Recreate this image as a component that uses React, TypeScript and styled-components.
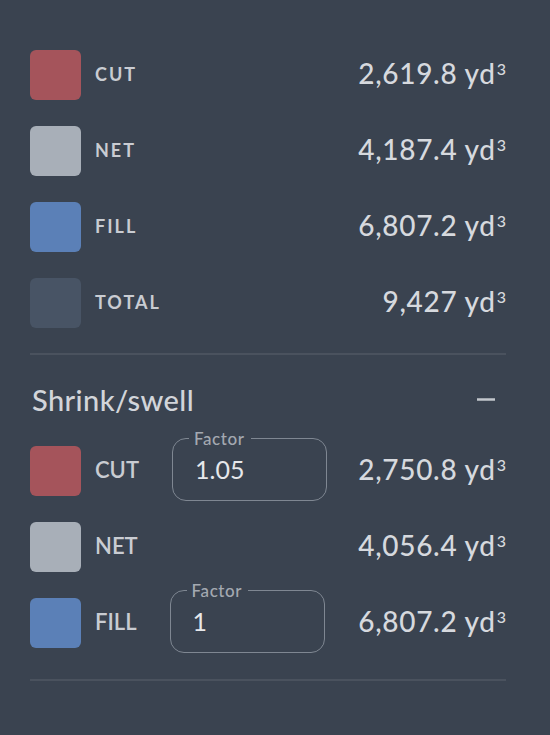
import React from 'react'
import styled, { createGlobalStyle } from 'styled-components'

const GlobalStyle = createGlobalStyle`
  html, body {
    margin: 0;
    padding: 0;
    background: #3a4350;
  }
  body {
    font-family: Lato, "Liberation Sans", sans-serif;
    color: #d5d8dd;
  }
`

const Panel = styled.div`
  display: flex;
  flex-direction: column;
  width: 476px;
  padding: 50px 30px 54px;
`

const Rows = styled.div`
  display: flex;
  flex-direction: column;
  gap: 26px;
`

const Row = styled.div`
  display: flex;
  align-items: center;
  height: 50px;
`

const Swatch = styled.div<{ $color: string }>`
  width: 51px;
  height: 50px;
  border-radius: 6px;
  background: ${p => p.$color};
  flex-shrink: 0;
`

const Label = styled.div<{ $small?: boolean }>`
  margin-left: 14px;
  color: #c9ccd2;
  ${p => p.$small
    ? `
    font-size: 18px;
    font-weight: 700;
    letter-spacing: 2px;
    text-transform: uppercase;
    margin-top: -3px;
  `
    : `
    font-size: 22px;
    font-weight: 600;
    margin-top: -4px;
  `}
`

const Value = styled.div`
  margin-left: auto;
  margin-top: -4px;
  font-size: 28px;
  font-weight: 500;
  letter-spacing: 0.7px;
  color: #d6d9de;
  white-space: nowrap;
`

const Cube = styled.span`
  font-size: 16px;
  vertical-align: 9px;
  letter-spacing: 0;
  margin-left: 1px;
`

const Divider = styled.hr<{ $gap: number }>`
  border: none;
  border-top: 2px solid #4a525e;
  margin: ${p => p.$gap}px 0 0;
  width: 100%;
`

const Header = styled.div`
  display: flex;
  align-items: center;
  justify-content: space-between;
  height: 40px;
  margin: 24px 0 27px;
`

const Title = styled.div`
  font-size: 29px;
  font-weight: 500;
  letter-spacing: 0.4px;
  color: #d2d5da;
  margin-left: 2px;
`

const IconButton = styled.button`
  display: flex;
  align-items: center;
  justify-content: center;
  width: 40px;
  height: 40px;
  padding: 0;
  border: none;
  background: transparent;
  color: #c3c7cd;
`

const Field = styled.fieldset`
  align-self: flex-start;
  margin: -15px 0 0 33px;
  padding: 0 16px;
  width: 155px;
  height: 70px;
  box-sizing: border-box;
  border: 1px solid #7f8792;
  border-radius: 14px;
  display: flex;
  align-items: center;
`

const Legend = styled.legend`
  padding: 0 6px 0 5px;
  font-size: 17px;
  font-weight: 500;
  letter-spacing: 0.6px;
  color: #a4a9b1;
  line-height: 15px;
`

const Input = styled.input`
  width: 100%;
  margin: -9px 0 0 6px;
  padding: 0;
  border: none;
  background: transparent;
  font-family: Lato, "Liberation Sans", sans-serif;
  font-size: 25px;
  color: #e6e8eb;
  outline: none;
`

type Item = { label: string; color: string; value: string; factor?: string }

const totals: Item[] = [
  { label: 'Cut', color: '#a5545b', value: '2,619.8' },
  { label: 'Net', color: '#a8afb8', value: '4,187.4' },
  { label: 'Fill', color: '#5b80b7', value: '6,807.2' },
  { label: 'Total', color: '#485465', value: '9,427' },
]

const adjusted: Item[] = [
  { label: 'CUT', color: '#a5545b', value: '2,750.8', factor: '1.05' },
  { label: 'NET', color: '#a8afb8', value: '4,056.4' },
  { label: 'FILL', color: '#5b80b7', value: '6,807.2', factor: '1' },
]

function Volume({ value }: { value: string }) {
  return (
    <Value>
      {value} yd<Cube>3</Cube>
    </Value>
  )
}

export default function App() {
  return (
    <>
      <GlobalStyle />
      <Panel>
        <Rows>
          {totals.map(t => (
            <Row key={t.label}>
              <Swatch $color={t.color} />
              <Label $small>{t.label}</Label>
              <Volume value={t.value} />
            </Row>
          ))}
        </Rows>
        <Divider $gap={25} />
        <Header>
          <Title>Shrink/swell</Title>
          <IconButton>
            <svg width="24" height="24" viewBox="0 0 24 24">
              <line x1="3" y1="12.5" x2="21" y2="12.5" stroke="currentColor" strokeWidth="2.5" />
            </svg>
          </IconButton>
        </Header>
        <Rows>
          {adjusted.map(t => (
            <Row key={t.label}>
              <Swatch $color={t.color} />
              <Label>{t.label}</Label>
              {t.factor && (
                <Field>
                  <Legend>Factor</Legend>
                  <Input defaultValue={t.factor} />
                </Field>
              )}
              <Volume value={t.value} />
            </Row>
          ))}
        </Rows>
        <Divider $gap={31} />
      </Panel>
    </>
  )
}
